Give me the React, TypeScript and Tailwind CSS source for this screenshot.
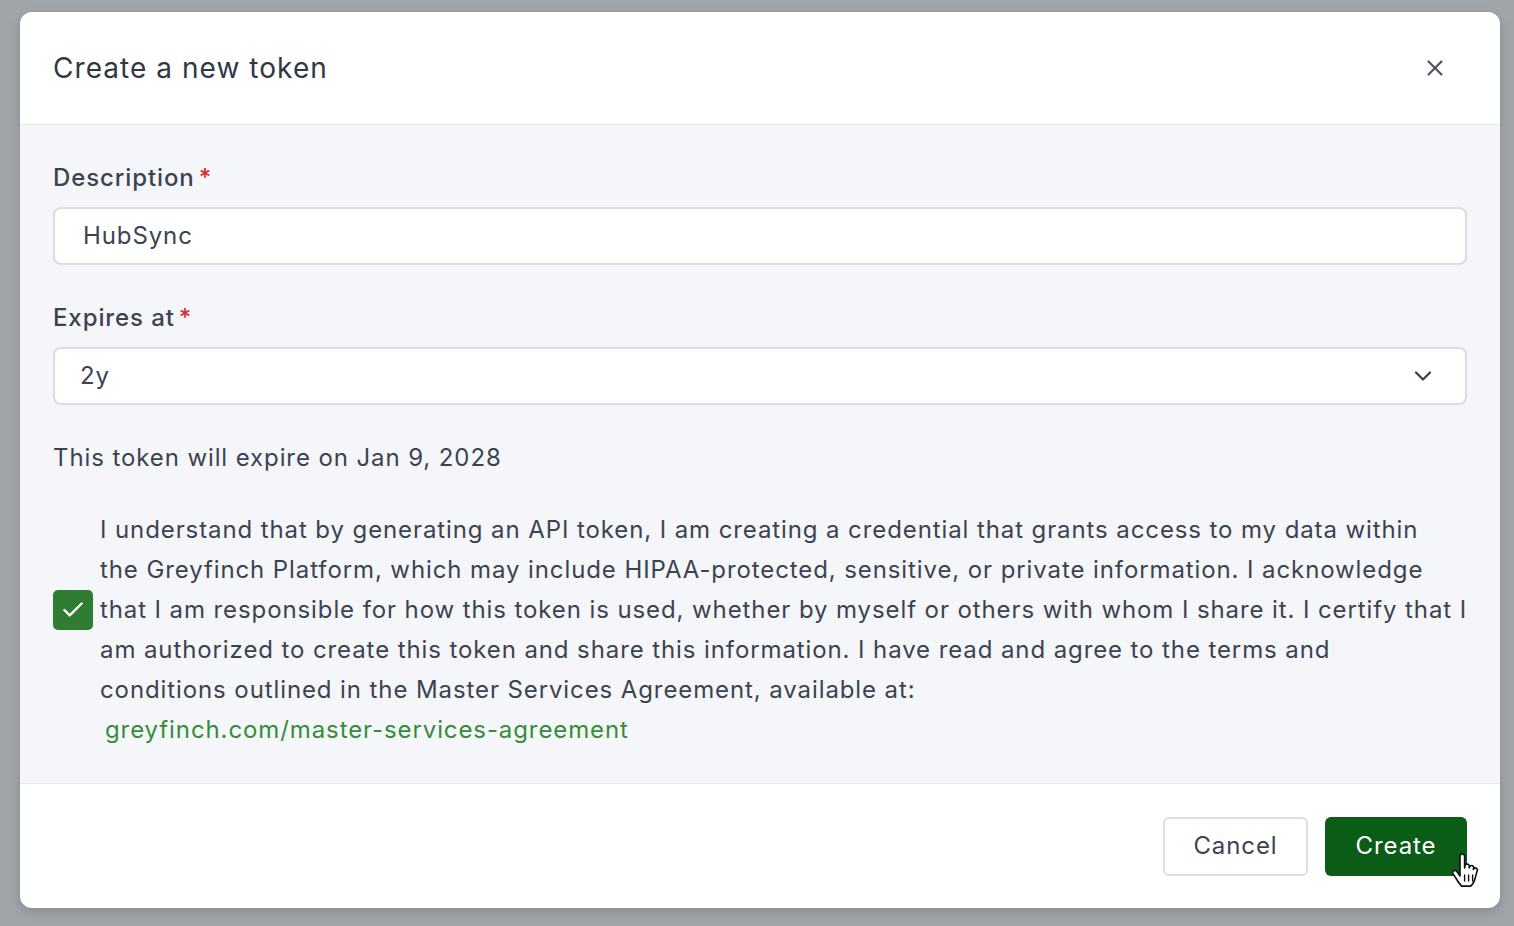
import { X, ChevronDown, Check } from "lucide-react";

const HandCursor = () => (
    <svg width="30" height="38" viewBox="0 0 30 38" className="absolute left-[126px] top-[36px]">
        <path
            d="M9 3.5c0-1.4 1-2.5 2.3-2.5s2.3 1.1 2.3 2.5V15l0.4-2.2c0.3-1.2 1.4-1.9 2.6-1.7 1.1 0.2 1.8 1.2 1.7 2.3l-0.1 1.6 0.6-1.3c0.5-1 1.6-1.4 2.6-1 1 0.4 1.5 1.4 1.2 2.4l-0.3 1.4 0.7-0.9c0.6-0.8 1.8-0.9 2.6-0.3 0.8 0.6 1 1.7 0.5 2.6l-1.8 6.8c-0.9 3.5-2.3 6.5-4.6 8.4H10.6c-1.5-1.6-3.4-4-4.9-6.6L2 20.6c-0.6-1-0.3-2.3 0.7-2.9 1-0.6 2.2-0.3 2.9 0.6L9 23V3.5z"
            fill="#ffffff"
            stroke="#111111"
            strokeWidth="1.6"
            strokeLinejoin="round"
        />
        <path d="M13.6 22v6M17.6 22v6M21.6 22v6" stroke="#111111" strokeWidth="1.4" strokeLinecap="round" />
    </svg>
);

export default function App() {
    return (
        <div className="w-[1514px] h-[926px] bg-[#a1a4a9] pt-[12px] pl-[20px] font-['Inter','Noto_Sans',sans-serif] text-[#3c4350] tracking-[0.9px]">
            <div className="w-[1480px] rounded-[12px] overflow-hidden bg-white shadow-[0_4px_12px_rgba(0,0,0,0.15)]">
                {/* Header */}
                <div className="h-[113px] flex items-center justify-between pl-[33px] pr-[52px] border-b border-[#e6e8ec]">
                    <h2 className="text-[28px] leading-[36px] text-[#2f3844] tracking-[1.05px]">Create a new token</h2>
                    <X size={26} strokeWidth={2} className="text-[#4b5563]" />
                </div>

                {/* Body */}
                <div className="bg-[#f5f6fa] px-[33px] pt-[37px] pb-[33px] border-b border-[#e6e8ec]">
                    <label className="block text-[24px] leading-[32px] font-medium text-[#3c4350]">
                        Description<span className="text-[#d32f2f] ml-[4px]">*</span>
                    </label>
                    <div className="mt-[13px] h-[58px] w-[1414px] rounded-[8px] border-2 border-[#d9dce1] bg-white flex items-center pl-[28px] text-[24px]">
                        HubSync
                    </div>

                    <label className="block mt-[37px] text-[24px] leading-[32px] font-medium text-[#3c4350]">
                        Expires at<span className="text-[#d32f2f] ml-[4px]">*</span>
                    </label>
                    <div className="mt-[13px] h-[58px] w-[1414px] rounded-[8px] border-2 border-[#d9dce1] bg-white flex items-center justify-between pl-[25px] pr-[28px] text-[24px]">
                        <span>2y</span>
                        <ChevronDown size={28} strokeWidth={2} className="text-[#3c4350]" />
                    </div>

                    <p className="mt-[33px] text-[24px] leading-[40px]">This token will expire on Jan 9, 2028</p>

                    <div className="mt-[32px] flex items-center gap-[7px]">
                        <div className="w-[40px] h-[40px] shrink-0 rounded-[5px] bg-[#2f7d32] flex items-center justify-center">
                            <Check size={26} strokeWidth={2.2} className="text-white" />
                        </div>
                        <p className="text-[24px] leading-[40px] whitespace-nowrap">
                            I understand that by generating an API token, I am creating a credential that grants access to my data within
                            <br />
                            the Greyfinch Platform, which may include HIPAA-protected, sensitive, or private information. I acknowledge
                            <br />
                            that I am responsible for how this token is used, whether by myself or others with whom I share it. I certify that I
                            <br />
                            am authorized to create this token and share this information. I have read and agree to the terms and
                            <br />
                            conditions outlined in the Master Services Agreement, available at:
                        </p>
                    </div>
                    <p className="pl-[52px] text-[24px] leading-[40px] text-[#358c3a]">
                        greyfinch.com/master-services-agreement
                    </p>
                </div>

                {/* Footer */}
                <div className="h-[124px] flex items-center justify-end gap-[17px] pr-[33px]">
                    <button className="h-[59px] w-[145px] rounded-[6px] border-2 border-[#dcdfe3] bg-white text-[24px] text-[#3c4350]">
                        Cancel
                    </button>
                    <div className="relative">
                        <button className="h-[59px] w-[142px] rounded-[6px] bg-[#0b5c16] text-[24px] text-white">Create</button>
                        <HandCursor />
                    </div>
                </div>
            </div>
        </div>
    );
}
